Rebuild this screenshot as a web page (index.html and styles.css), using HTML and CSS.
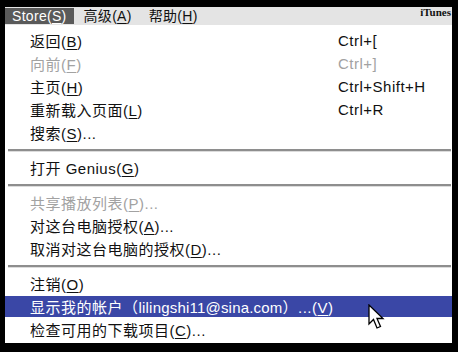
FILE: index.html
```html
<!DOCTYPE html>
<html lang="zh-CN">
<head>
<meta charset="UTF-8" />
<title>iTunes Store 菜单</title>
<link rel="stylesheet" href="styles.css">
</head>
<body>

<div class="ventana">
  <div class="barra">
    <span class="barra-item activo">Store(<u>S</u>)</span>
    <span class="barra-item">高级(<u>A</u>)</span>
    <span class="barra-item">帮助(<u>H</u>)</span>
    <span class="marca">iTunes</span>
  </div>

  <div class="menu">
    <div class="fila"><span class="texto">返回(<u>B</u>)</span><span class="atajo">Ctrl+[</span></div>
    <div class="fila off"><span class="texto">向前(<u>F</u>)</span><span class="atajo">Ctrl+]</span></div>
    <div class="fila"><span class="texto">主页(<u>H</u>)</span><span class="atajo">Ctrl+Shift+H</span></div>
    <div class="fila"><span class="texto">重新载入页面(<u>L</u>)</span><span class="atajo">Ctrl+R</span></div>
    <div class="fila"><span class="texto">搜索(<u>S</u>)...</span></div>
    <div class="sep"></div>
    <div class="fila"><span class="texto">打开 Genius(<u>G</u>)</span></div>
    <div class="sep"></div>
    <div class="fila off"><span class="texto">共享播放列表(<u>P</u>)...</span></div>
    <div class="fila"><span class="texto">对这台电脑授权(<u>A</u>)...</span></div>
    <div class="fila"><span class="texto">取消对这台电脑的授权(<u>D</u>)...</span></div>
    <div class="sep"></div>
    <div class="fila"><span class="texto">注销(<u>O</u>)</span></div>
    <div class="fila sel"><span class="texto">显示我的帐户（<span class="correo">lilingshi11@sina.com</span>）...(<u>V</u>)</span></div>
    <div class="fila"><span class="texto">检查可用的下载项目(<u>C</u>)...</span></div>

    <svg class="cursor" width="17" height="26" viewBox="0 0 17 26">
      <path d="M1 1 L1 20 L5.5 15.5 L9 24 L12.5 22.5 L9 14.5 L15 14.5 Z" fill="#fff" stroke="#000" stroke-width="1.3" stroke-linejoin="miter"/>
    </svg>
  </div>
</div>

</body>
</html>
```

FILE: styles.css
```css
* { box-sizing: border-box; }
body { margin: 0; background: #000; font-family: "Liberation Sans", "Noto Sans CJK SC", sans-serif; }
.ventana { width: 458px; height: 352px; padding: 7px 6px 9px 5px; }
.barra { display: flex; align-items: center; height: 18px; background: #e4e4e4; font-size: 14px; color: #111; }
.barra-item { padding: 0 7px; line-height: 16px; height: 16px; margin-right: 3px; letter-spacing: 0.3px; }
.barra-item.activo { background: #5a5a5a; color: #fff; }
.barra u, .menu u { text-decoration-thickness: 1px; text-underline-offset: 2px; }
.marca { margin-left: auto; align-self: flex-start; font-family: "Liberation Serif", serif; font-weight: bold; font-size: 11px; color: #111; line-height: 11px; padding-right: 1px; }
.menu { position: relative; height: 318px; background: #fff; padding-top: 4px; font-size: 15px; letter-spacing: 0.5px; color: #111; }
.fila { display: flex; align-items: center; height: 23px; padding-left: 25px; white-space: nowrap; }
.texto { width: 308px; }
.atajo { flex: 1; }
.fila.off { color: #a2a2a2; }
.fila.sel { background: #3a47a6; color: #fff; height: 21px; margin: 1px 0; }
.correo { letter-spacing: 0.2px; }
.sep { height: 12px; display: flex; align-items: center; padding: 0 1px 0 3px; }
.sep::after { content: ""; flex: 1; height: 2px; background: #8e8e8e; border-bottom: 1px solid #dcdcdc; }
.cursor { position: absolute; left: 363px; top: 279px; }
```
